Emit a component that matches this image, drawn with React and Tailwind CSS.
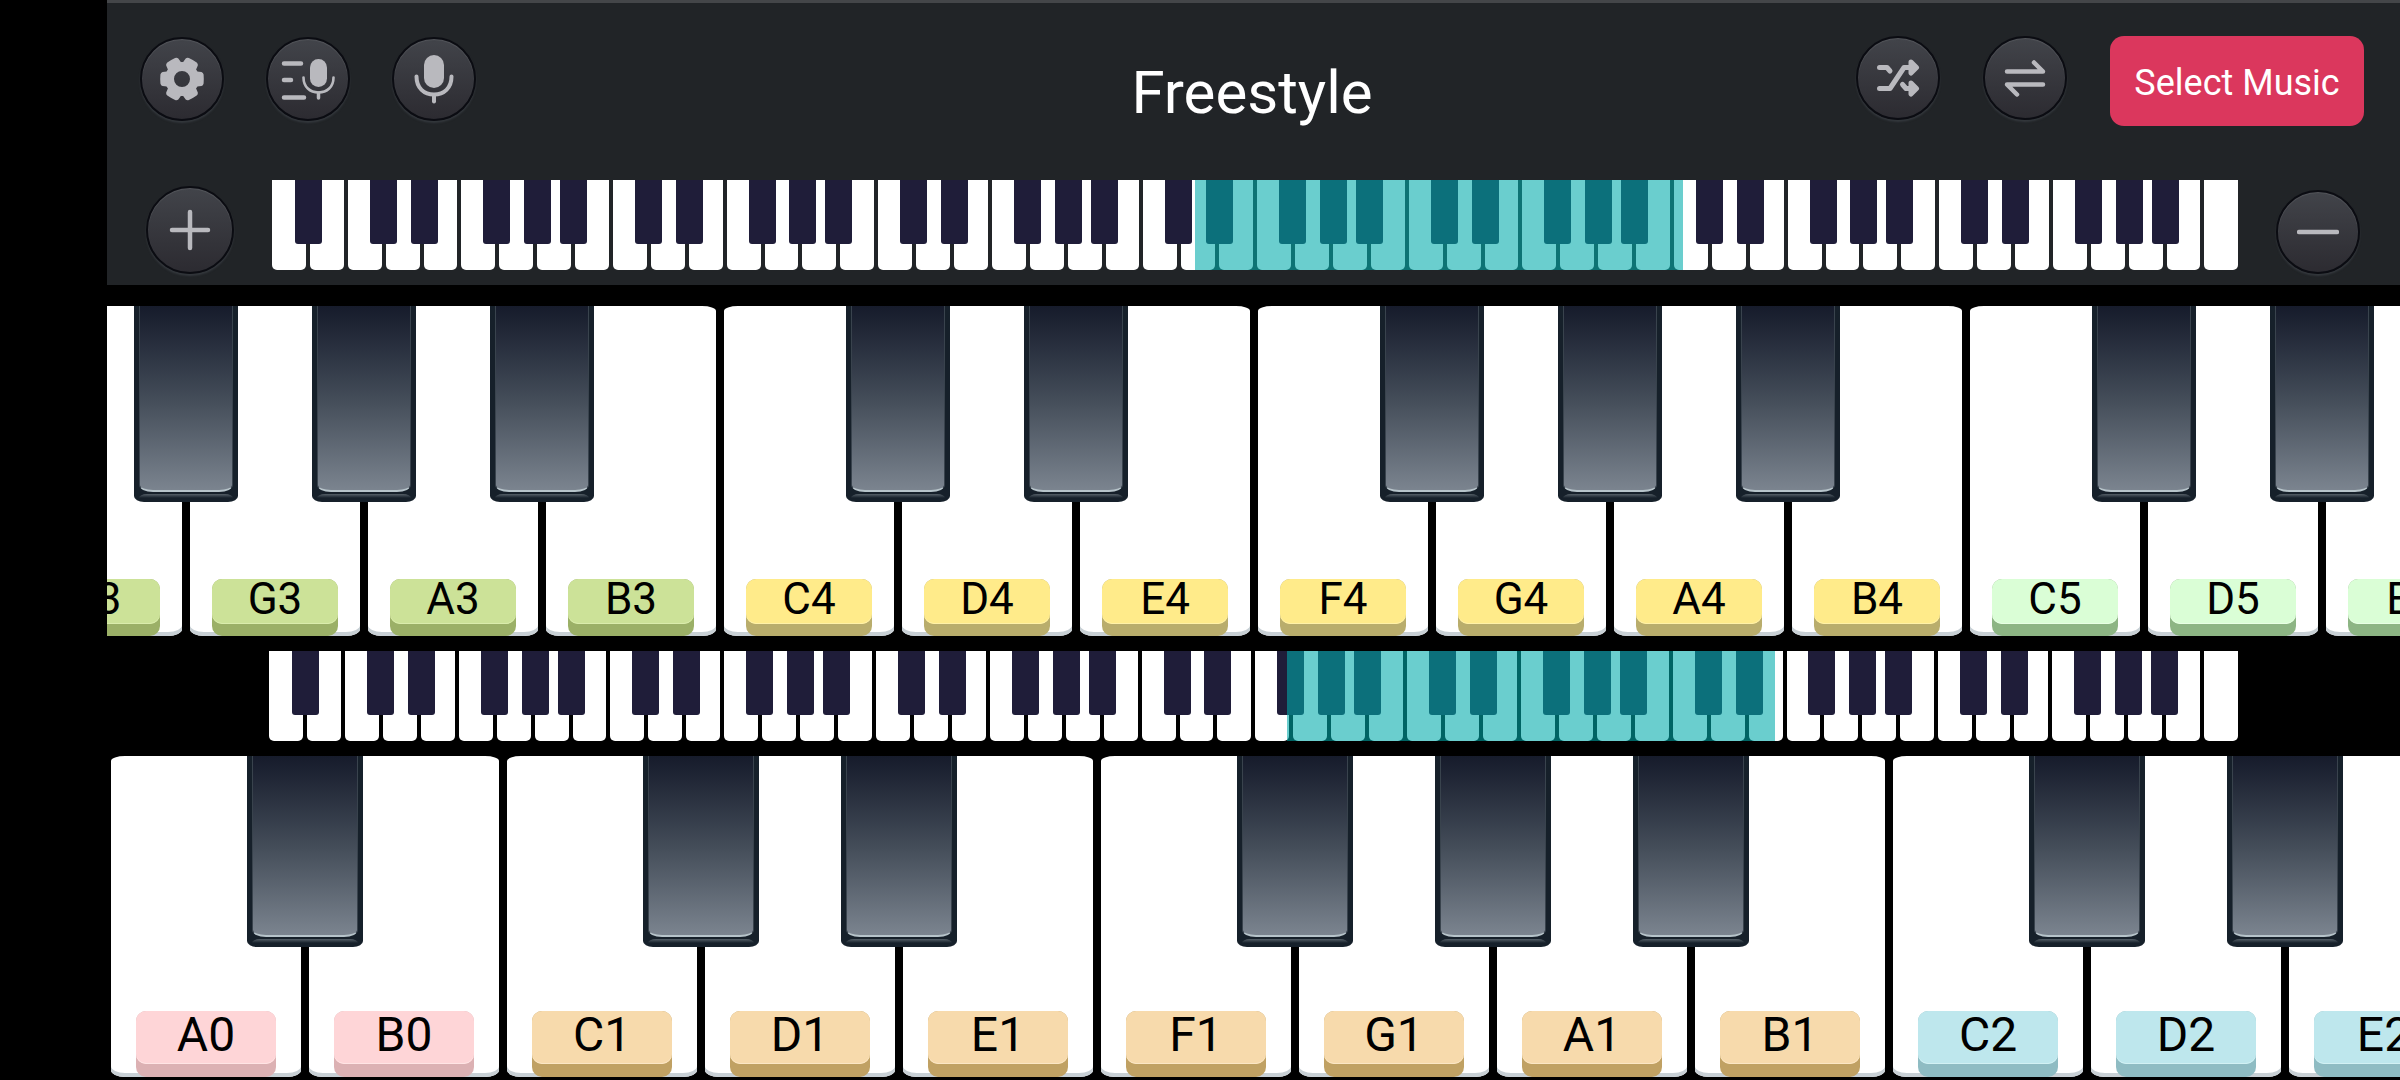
import React, { useState } from 'react';

const LABEL_COLORS = {
  0: 'bg-[#fed5d7] shadow-[inset_0_-1px_0_#ffe4e4]',
  1: 'bg-[#f7daac] shadow-[inset_0_-1px_0_#fbe6c4]',
  2: 'bg-[#bee7ed] shadow-[inset_0_-1px_0_#d2f1f4]',
  3: 'bg-[#cce298] shadow-[inset_0_-1px_0_#daecac]',
  4: 'bg-[#ffeb8a] shadow-[inset_0_-1px_0_#fff1a8]',
  5: 'bg-[#dafed6] shadow-[inset_0_-1px_0_#e8ffe4]',
};

const LIP_COLORS = {
  0: 'bg-[#dcb1b3]',
  1: 'bg-[#c0a163]',
  2: 'bg-[#8fbcc3]',
  3: 'bg-[#9bb067]',
  4: 'bg-[#b9ad6c]',
  5: 'bg-[#8db584]',
};

const UPPER_NOTES = ['F3', 'G3', 'A3', 'B3', 'C4', 'D4', 'E4', 'F4', 'G4', 'A4', 'B4', 'C5', 'D5', 'E5'];
const LOWER_NOTES = ['A0', 'B0', 'C1', 'D1', 'E1', 'F1', 'G1', 'A1', 'B1', 'C2', 'D2', 'E2'];

const MINI_NOTES = Array.from({ length: 52 }, (_, i) => 'ABCDEFG'[i % 7]);

// black keys of the overview strip are not centred on the gap
const MINI_SHARP = {
  C: '-right-[15px]',
  D: '-right-[18px]',
  F: '-right-[15px]',
  G: '-right-[18px]',
  A: '-right-[16px]',
};

const hasSharp = (note) => 'CDFGA'.includes(note[0]);

const RoundButton = ({ label, size = 'size-[84px]', onClick, children }) => (
  <button
    type="button"
    aria-label={label}
    onClick={onClick}
    className={`${size} shrink-0 flex items-center justify-center rounded-full border-2 border-[#0b0c12] bg-linear-to-b from-[#42444a] to-[#2c2b31] text-[#b9b9be] shadow-[0_2px_2px_#34383d,inset_0_1px_1px_#54565b]`}
  >
    {children}
  </button>
);

const GearIcon = () => (
  <svg viewBox="0 0 44 44" className="size-[44px]" fill="currentColor">
    <circle cx="22" cy="22" r="12.500" fill="none" stroke="currentColor" strokeWidth="9" />
    {[0, 60, 120, 180, 240, 300].map((angle) => (
      <path
        key={angle}
        transform={`rotate(${angle} 22 22)`}
        d="M32 12.500L37 14.500L41.500 15Q43.200 15.500 43.600 17.500Q44 22 43.600 26.500Q43.200 28.500 41.500 29L37 29.500L32 31.500Z"
      />
    ))}
  </svg>
);

const MicListIcon = () => (
  <svg viewBox="0 0 54 42" className="w-[54px] h-[42px]" fill="none" stroke="currentColor" strokeLinecap="round">
    <path d="M3 5.500H20M3 22H10M3 39.500H23" strokeWidth="4.500" />
    <rect x="29" y="1" width="17" height="28" rx="8.500" fill="currentColor" stroke="none" />
    <path d="M22.500 19.500C22.500 29 29 34.500 37.500 34.500S52.500 29 52.500 19.500" strokeWidth="2.600" />
    <path d="M37.500 35V40" strokeWidth="3.500" />
  </svg>
);

const MicIcon = () => (
  <svg viewBox="0 0 40 50" className="w-[40px] h-[50px]" fill="none" stroke="currentColor" strokeLinecap="round">
    <rect x="10" y="1" width="20" height="33" rx="10" fill="currentColor" stroke="none" />
    <path d="M2.500 22.500C2.500 34 10 40.500 20 40.500S37.500 34 37.500 22.500" strokeWidth="4" />
    <path d="M20 41V47.500" strokeWidth="4" />
  </svg>
);

const ShuffleIcon = () => (
  <svg viewBox="0 0 44 42" className="w-[44px] h-[42px]" fill="none" stroke="currentColor" strokeWidth="5" strokeLinecap="round" strokeLinejoin="round">
    <path d="M3.500 10.500H11L14 14" />
    <path d="M3.500 31.500H14L28 10.500H38" />
    <path d="M26.500 27.500L30 31.500H38" />
    <path d="M35 5L40.500 10.500L35 16ZM35 26L40.500 31.500L35 37Z" fill="currentColor" />
  </svg>
);

const SwapIcon = () => (
  <svg viewBox="0 0 42 38" className="w-[42px] h-[38px]" fill="none" stroke="currentColor" strokeWidth="4.500" strokeLinecap="round" strokeLinejoin="round">
    <path d="M3 12.500H39L30 3.500" />
    <path d="M39 25.500H3L13 35.500" />
  </svg>
);

const PlusIcon = () => (
  <svg viewBox="0 0 42 42" className="size-[42px]" stroke="currentColor" strokeWidth="4.500" strokeLinecap="round">
    <path d="M3 21H39M21 3V39" />
  </svg>
);

const MinusIcon = () => (
  <svg viewBox="0 0 42 42" className="size-[42px]" stroke="currentColor" strokeWidth="4.500" strokeLinecap="round">
    <path d="M2 21H40" />
  </svg>
);

const MiniKeyboard = ({ start, span }) => (
  <div className="relative flex flex-1 h-[90px] gap-[4px]">
    {MINI_NOTES.map((note, i) => (
      <div key={i} className="relative flex-1 rounded-b-[5px] bg-white">
        {hasSharp(note) && i < 51 && (
          <div className={`absolute top-0 z-10 w-[27px] h-[64px] rounded-b-[3px] bg-[#1f1d39] ${MINI_SHARP[note]}`} />
        )}
      </div>
    ))}
    <div
      className="absolute inset-y-0 z-20 bg-[rgba(0,171,171,0.585)]"
      style={{ left: `${start}%`, width: `${span}%` }}
    />
  </div>
);

const BlackKey = ({ className }) => (
  <div className={`absolute top-0 z-10 flex flex-col rounded-b-[10px_6px] bg-[#16202a] px-[5px] pb-[4px] ${className}`}>
    <div className="flex-1 rounded-b-[14px_7px] border-x border-x-[#39434d] border-b-2 border-b-[#b7c4ca] bg-linear-to-b from-[#161b2b] via-[#434c58] via-50% to-[#7b848f]" />
    <div className="mt-[2px] h-[4px] rounded-t-[8px_4px] bg-linear-to-b from-[#566068] to-[#16202a]" />
  </div>
);

const Keyboard = ({ notes, keyClass, sharpClass, labelClass, lipClass, offset = '' }) => (
  <div className="overflow-hidden">
    <div className={`flex ${offset}`}>
      {notes.map((note) => (
        <div key={note} className={`relative shrink-0 px-[4px] ${keyClass}`}>
          <button
            type="button"
            className="flex size-full items-end justify-center rounded-t-[14px_5px] rounded-b-[14px_7px] bg-white shadow-[inset_0_-4px_0_#c8d0d5]"
          >
            <span className={`rounded-[10px] ${lipClass} ${LIP_COLORS[note[1]]}`}>
              <span className={`block rounded-[10px] text-center text-black ${labelClass} ${LABEL_COLORS[note[1]]}`}>
                {note}
              </span>
            </span>
          </button>
          {hasSharp(note) && <BlackKey className={sharpClass} />}
        </div>
      ))}
    </div>
  </div>
);

export default function App() {
  const [span, setSpan] = useState(24.8);

  return (
    <div className="min-h-screen overflow-hidden bg-black pl-[107px] font-[Roboto,sans-serif]">
      <header className="h-[285px] border-t-3 border-[#444649] bg-[#212427]">
        <div className="grid grid-cols-[1fr_auto_1fr] items-start pt-[33px] pl-[33px] pr-[36px]">
          <div className="flex gap-[42px] pt-px">
            <RoundButton label="Settings"><GearIcon /></RoundButton>
            <RoundButton label="Recordings"><MicListIcon /></RoundButton>
            <RoundButton label="Record"><MicIcon /></RoundButton>
          </div>
          <h1 className="pt-[21px] text-[60px] leading-[72px] text-white">Freestyle</h1>
          <div className="flex items-start justify-end gap-[43px]">
            <RoundButton label="Shuffle"><ShuffleIcon /></RoundButton>
            <RoundButton label="Swap keyboards"><SwapIcon /></RoundButton>
            <button type="button" className="h-[90px] w-[254px] rounded-[14px] bg-[#db375d] pt-[3px] text-[36px] text-white">
              Select Music
            </button>
          </div>
        </div>

        <div className="mt-[51px] flex h-[94px] items-end gap-[38px] pl-[39px] pr-[40px]">
          <RoundButton label="Zoom in" size="size-[88px]" onClick={() => setSpan(span - 2)}><PlusIcon /></RoundButton>
          <div className="flex flex-1 self-start">
            <MiniKeyboard start={46.95} span={span} />
          </div>
          <RoundButton label="Zoom out" onClick={() => setSpan(span + 2)}><MinusIcon /></RoundButton>
        </div>
      </header>

      <main className="pt-[21px]">
        <Keyboard
          notes={UPPER_NOTES}
          offset="-ml-[99px]"
          keyClass="w-[178px] h-[330px]"
          sharpClass="w-[104px] h-[196px] -right-[52px]"
          lipClass="w-[126px] pb-[12px]"
          labelClass="h-[45px] text-[44px] leading-[40px]"
        />
        <div className="flex px-[162px] py-[15px]">
          <MiniKeyboard start={51.7} span={span} />
        </div>
        <Keyboard
          notes={LOWER_NOTES}
          keyClass="w-[198px] h-[321px]"
          sharpClass="w-[116px] h-[191px] -right-[58px]"
          lipClass="w-[140px] pb-[13px]"
          labelClass="h-[53px] text-[48px] leading-[47px]"
        />
      </main>
    </div>
  );
}
